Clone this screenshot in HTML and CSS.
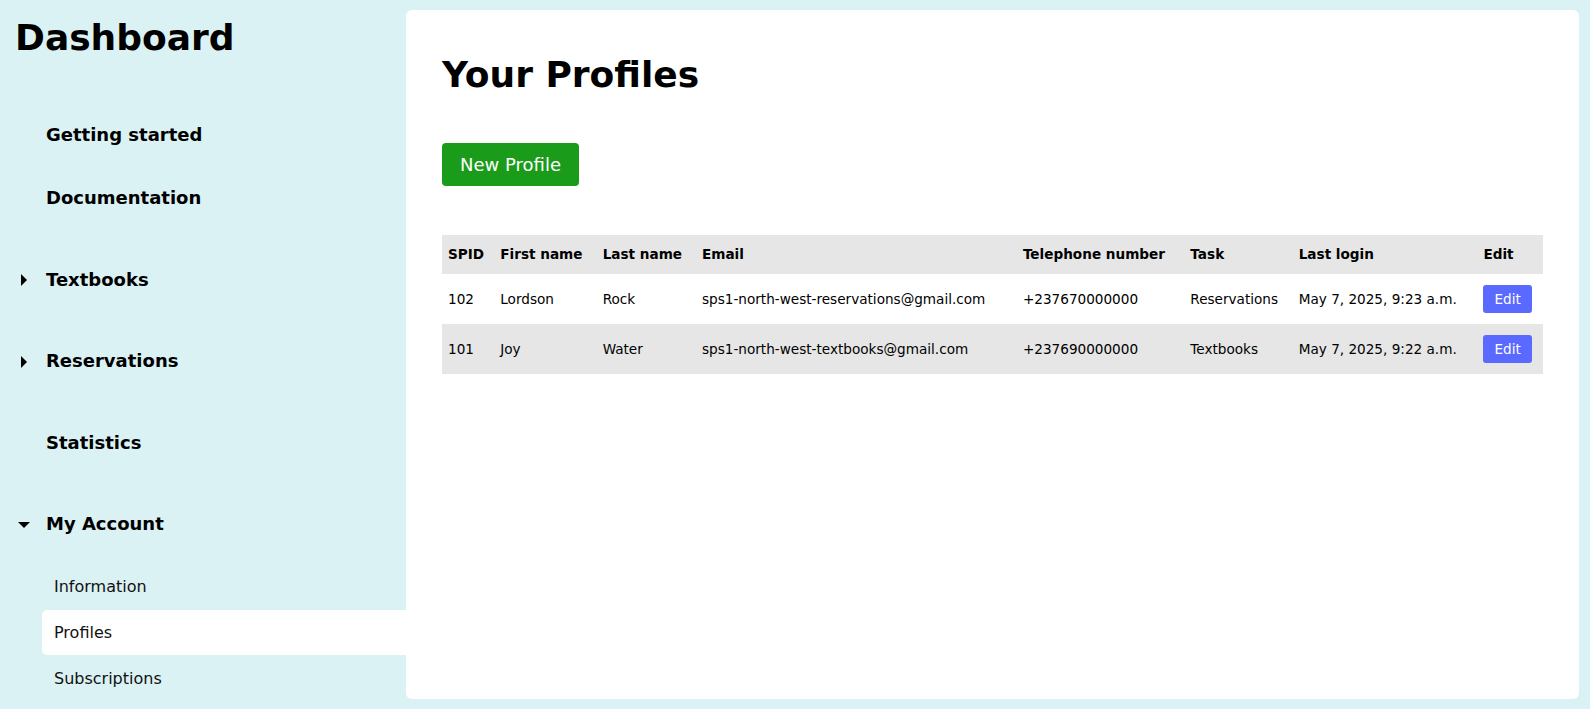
FILE: index.html
```html
<!DOCTYPE html>
<html lang="en">
<head>
  <meta charset="UTF-8">
  <meta name="viewport" content="width=device-width,initial-scale=1.0">
  <title>Dashboard - Profiles</title>
  <link rel="stylesheet" href="styles.css">
</head>
<body>
  <aside class="sidebar">
    <h1 class="brand">Dashboard</h1>

    <nav class="nav">
      <a class="nav-link" href="#">Getting started</a>
      <a class="nav-link" href="#">Documentation</a>

      <div class="nav-section">
        <div class="nav-toggle"><span class="caret caret-right"></span>Textbooks</div>
      </div>
      <div class="nav-section">
        <div class="nav-toggle"><span class="caret caret-right"></span>Reservations</div>
      </div>
      <div class="nav-section">
        <a class="nav-link" href="#">Statistics</a>
      </div>
      <div class="nav-section">
        <div class="nav-toggle"><span class="caret caret-down"></span>My Account</div>
        <ul class="subnav">
          <li><a href="#">Information</a></li>
          <li class="active"><a href="#">Profiles</a></li>
          <li><a href="#">Subscriptions</a></li>
        </ul>
      </div>
    </nav>
  </aside>

  <main class="panel">
    <h1 class="page-title">Your Profiles</h1>

    <div class="actions">
      <button class="btn-new">New Profile</button>
    </div>

    <table class="profiles">
      <thead>
        <tr>
          <th>SPID</th>
          <th>First name</th>
          <th>Last name</th>
          <th>Email</th>
          <th>Telephone number</th>
          <th>Task</th>
          <th>Last login</th>
          <th>Edit</th>
        </tr>
      </thead>
      <tbody>
        <tr>
          <td>102</td>
          <td>Lordson</td>
          <td>Rock</td>
          <td>sps1-north-west-reservations@gmail.com</td>
          <td>+237670000000</td>
          <td>Reservations</td>
          <td>May 7, 2025, 9:23 a.m.</td>
          <td><button class="btn-edit">Edit</button></td>
        </tr>
        <tr>
          <td>101</td>
          <td>Joy</td>
          <td>Water</td>
          <td>sps1-north-west-textbooks@gmail.com</td>
          <td>+237690000000</td>
          <td>Textbooks</td>
          <td>May 7, 2025, 9:22 a.m.</td>
          <td><button class="btn-edit">Edit</button></td>
        </tr>
      </tbody>
    </table>
  </main>
</body>
</html>
```

FILE: styles.css
```css
/* ——— base ——— */
:root {
  --bg: #dbf2f4;
  --panel: #fff;
  --fg: #000;
  --stripe: #e6e6e6;
  --green: #1a9c1a;
  --blue: #5a69ff;
}
* { box-sizing: border-box; }
body {
  margin: 0; min-height: 100vh;
  display: flex;
  background: var(--bg); color: var(--fg);
  font-family: "DejaVu Sans", Verdana, sans-serif;
}
a { color: inherit; text-decoration: none; }

/* ——— sidebar ——— */
.sidebar { width: 406px; flex: none; }
.brand {
  margin: 17px 0 0 15px;
  font-size: 36px; line-height: normal;
}
.nav { margin-top: 45px; }
.nav-link, .nav-toggle {
  display: flex; align-items: center;
  padding: 21px 0 21px 46px;
  font-size: 18px; font-weight: bold;
}
.nav-toggle { padding-left: 17.5px; cursor: pointer; }
.nav-section { margin-top: 18.5px; }

.caret {
  width: 12px; height: 12px; margin: 2px 16.5px 0 0;
  display: flex; align-items: center; justify-content: center;
}
.caret::before { content: ""; border: 6px solid transparent; }
.caret-right::before { border-left-color: #000; border-left-width: 6.5px; border-right-width: 0; }
.caret-down::before { border-top-color: #000; border-top-width: 6.5px; border-bottom-width: 0; }

.subnav { list-style: none; margin: 9px 0 0; padding: 0; }
.subnav li { margin: 0 0 1px 42px; }
.subnav a {
  display: block; padding: 13px 12px;
  font-size: 16px; color: #111;
}
.subnav li.active a { background: var(--panel); border-radius: 5px 0 0 5px; }

/* ——— main panel ——— */
.panel {
  flex: 1;
  margin: 10px 11px 10px 0;
  padding: 43.5px 36px;
  background: var(--panel); border-radius: 6px;
}
.page-title {
  margin: 0 0 48px;
  font-size: 36px; line-height: normal;
}
.actions { display: flex; }
.btn-new {
  padding: 11px 18px;
  font: 18px "DejaVu Sans", sans-serif;
  background: var(--green); color: #fff;
  border: none; border-radius: 4px; cursor: pointer;
}

/* ——— table ——— */
.profiles {
  width: 100%; margin-top: 49px;
  border-collapse: collapse; font-size: 13.6px;
}
.profiles th, .profiles td { text-align: left; padding: 11px 6px; }
.profiles th { padding: 11.6px 6px; }
.profiles thead tr, .profiles tbody tr:nth-child(even) { background: var(--stripe); }
.btn-edit {
  padding: 6px 11px;
  font: 13.6px "DejaVu Sans", sans-serif;
  background: var(--blue); color: #fff;
  border: none; border-radius: 3px; cursor: pointer;
}
```
